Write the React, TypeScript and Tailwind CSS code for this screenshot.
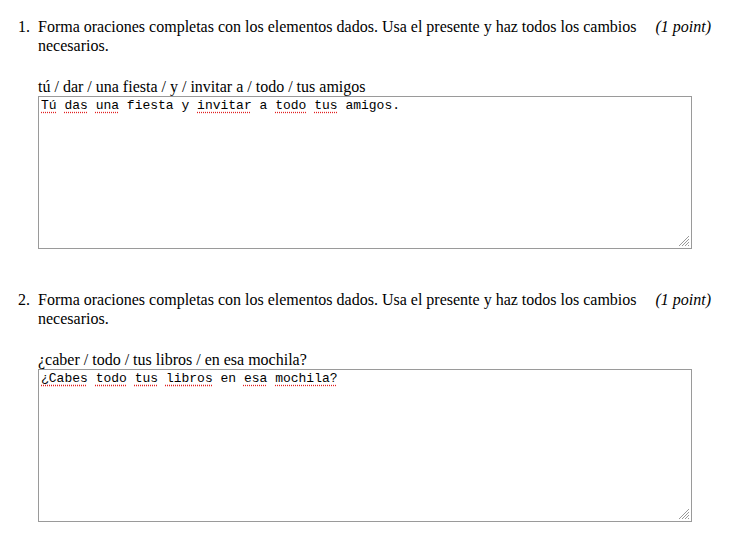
import React from "react";

type Word = { t: string; u?: boolean };

function Handle() {
  return (
    <svg className="absolute right-[1px] bottom-[1px]" width="12" height="12" viewBox="0 0 12 12">
      <line x1="11" y1="1" x2="1" y2="11" stroke="#9a9a9a" strokeWidth="1" />
      <line x1="11" y1="4" x2="4" y2="11" stroke="#9a9a9a" strokeWidth="1" />
      <line x1="11" y1="7" x2="7" y2="11" stroke="#9a9a9a" strokeWidth="1" />
      <line x1="11" y1="10" x2="10" y2="11" stroke="#9a9a9a" strokeWidth="1" />
    </svg>
  );
}

function Question({ n, prompt, words, first }: { n: number; prompt: string; words: Word[]; first?: boolean }) {
  return (
    <div className={`flex ${first ? "" : "mt-[41px]"}`}>
      <div className="w-[20px] shrink-0">{n}.</div>
      <div className="flex-1">
        <div className="flex items-start">
          <div className="w-[612px]">
            Forma oraciones completas con los elementos dados. Usa el presente y haz todos los cambios necesarios.
          </div>
          <div className="ml-auto italic whitespace-nowrap">(1 point)</div>
        </div>
        <div className="mt-[22px] leading-[19px]">{prompt}</div>
        <div
          className="relative w-[654px] h-[153px] border border-[#9a9a9a] bg-white px-[2px] pt-[1px] text-[13px] leading-[15px] text-black"
          style={{ fontFamily: '"Liberation Mono", "Courier New", monospace' }}
        >
          {words.map((w, i) => (
            <React.Fragment key={i}>
              {i > 0 ? " " : ""}
              {w.u ? (
                <span className="underline decoration-dotted decoration-[#e02020] underline-offset-[3px]">{w.t}</span>
              ) : (
                <span>{w.t}</span>
              )}
            </React.Fragment>
          ))}
          <Handle />
        </div>
      </div>
    </div>
  );
}

export default function App() {
  const q1: Word[] = [
    { t: "Tú", u: true },
    { t: "das", u: true },
    { t: "una", u: true },
    { t: "fiesta" },
    { t: "y" },
    { t: "invitar", u: true },
    { t: "a" },
    { t: "todo", u: true },
    { t: "tus", u: true },
    { t: "amigos." },
  ];
  const q2: Word[] = [
    { t: "¿Cabes", u: true },
    { t: "todo", u: true },
    { t: "tus", u: true },
    { t: "libros", u: true },
    { t: "en" },
    { t: "esa", u: true },
    { t: "mochila?", u: true },
  ];
  return (
    <div
      className="w-[733px] h-[557px] bg-white text-black pl-[18px] pr-[22px] pt-[17px] text-[16px] leading-[19px]"
      style={{ fontFamily: '"Liberation Serif", "Times New Roman", serif' }}
    >
      <Question n={1} first prompt="tú / dar / una fiesta / y / invitar a / todo / tus amigos" words={q1} />
      <Question n={2} prompt="¿caber / todo / tus libros / en esa mochila?" words={q2} />
    </div>
  );
}
